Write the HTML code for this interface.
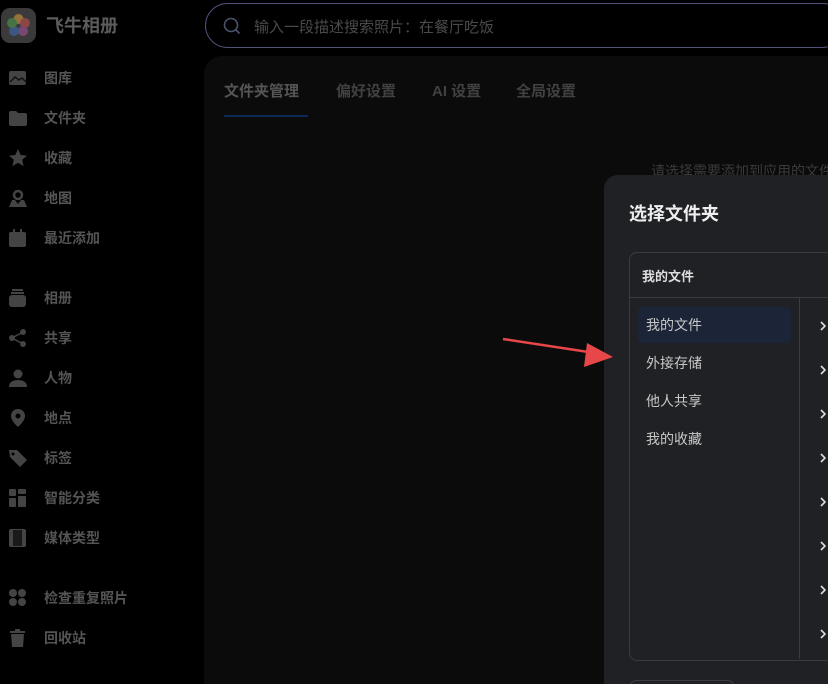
<!DOCTYPE html>
<html><head><meta charset="utf-8"><style>
html,body{margin:0;width:828px;height:684px;overflow:hidden;}
body{background:#000;position:relative;font-family:"Liberation Sans","Noto Sans CJK SC",sans-serif;}
.logo{position:absolute;left:1px;top:8px;width:35px;height:35px;border-radius:9px;background:#3a3a3a;}
.brand{position:absolute;left:46px;top:12px;font-size:18px;font-weight:bold;color:#5c5c5c;}
.nav{position:absolute;left:0;width:200px;height:40px;}
.nav span{position:absolute;left:44px;top:10px;font-size:14px;font-weight:bold;color:#545454;}
.nav svg{position:absolute;left:8px;top:10px;}
.search{position:absolute;left:205px;top:3px;width:640px;height:45px;border:1.5px solid #50527a;border-radius:23px;box-sizing:border-box;}
.search span{position:absolute;left:48px;top:12px;font-size:15px;color:#4a4a4a;}
.main{position:absolute;left:204px;top:56px;width:640px;height:628px;background:#0b0b0b;border-radius:18px 18px 0 0;}
.tab{position:absolute;top:80px;font-size:15px;font-weight:bold;color:#414141;}
.modal{position:absolute;left:604px;top:175px;width:240px;height:509px;background:#202124;border-radius:14px 14px 0 0;}
.box{position:absolute;left:629px;top:252px;width:220px;height:407px;border:1px solid #3a3b3e;border-radius:8px;}
.it{position:absolute;left:646px;font-size:14px;color:#c8c8c8;line-height:18px}
</style></head><body>
<div class="logo"><svg width="35" height="35" viewBox="0 0 35 35"><g opacity=".55"><circle cx="17.5" cy="11" r="5" fill="#e0a040"/><circle cx="24" cy="15" r="5" fill="#d05050"/><circle cx="22" cy="23" r="5" fill="#b050a0"/><circle cx="13" cy="23" r="5" fill="#4070c0"/><circle cx="11" cy="15" r="5" fill="#50a050"/></g></svg></div>
<div class="brand">飞牛相册</div>
<div class="search"><svg style="position:absolute;left:17px;top:13px" width="18" height="18" viewBox="0 0 18 18"><circle cx="8" cy="8" r="6.5" fill="none" stroke="#4a5470" stroke-width="1.6"/><path d="M13 13l3.5 3.5" stroke="#4a5470" stroke-width="1.6"/></svg><span>输入一段描述搜索照片：在餐厅吃饭</span></div>
<div class="main"></div>
<div class="tab" style="left:224px;color:#555">文件夹管理</div>
<div style="position:absolute;left:224px;top:115px;width:84px;height:2px;background:#0d2a5a"></div>
<div class="tab" style="left:336px">偏好设置</div>
<div class="tab" style="left:432px">AI 设置</div>
<div class="tab" style="left:516px">全局设置</div>
<div style="position:absolute;left:651px;top:161px;font-size:14px;color:#3a3a3a;white-space:nowrap">请选择需要添加到应用的文件夹</div>

<div class="nav" style="top:58px"><svg width="20" height="20"><rect x="1" y="3" width="17" height="14" rx="2" fill="#444"/><path d="M2 14l5-5 4 3 3-2 4 4" stroke="#111" stroke-width="1.5" fill="none"/></svg><span>图库</span></div>
<div class="nav" style="top:98px"><svg width="20" height="20"><path d="M1 5a2 2 0 012-2h5l2 2h7a2 2 0 012 2v9a2 2 0 01-2 2H3a2 2 0 01-2-2z" fill="#444"/></svg><span>文件夹</span></div>
<div class="nav" style="top:138px"><svg width="20" height="20"><path d="M10 1l2.7 6 6.3.6-4.8 4.2 1.4 6.3L10 14.8 4.4 18.1l1.4-6.3L1 7.6l6.3-.6z" fill="#444"/></svg><span>收藏</span></div>
<div class="nav" style="top:178px"><svg width="20" height="20"><circle cx="10" cy="7" r="4" fill="none" stroke="#444" stroke-width="2.5"/><path d="M1 19l3-7h3l3 4 3-4h3l3 7z" fill="#444"/></svg><span>地图</span></div>
<div class="nav" style="top:218px"><svg width="20" height="20"><rect x="1" y="4" width="17" height="15" rx="2" fill="#444"/><rect x="5" y="1" width="2" height="4" fill="#444"/><rect x="12" y="1" width="2" height="4" fill="#444"/></svg><span>最近添加</span></div>
<div class="nav" style="top:278px"><svg width="20" height="20"><rect x="1" y="7" width="17" height="12" rx="3" fill="#444"/><rect x="3" y="4" width="13" height="2" fill="#444"/><rect x="4" y="1" width="11" height="2" fill="#444"/></svg><span>相册</span></div>
<div class="nav" style="top:318px"><svg width="20" height="20"><circle cx="15" cy="4" r="3" fill="#444"/><circle cx="4" cy="10" r="3" fill="#444"/><circle cx="15" cy="16" r="3" fill="#444"/><path d="M15 4L4 10l11 6" stroke="#444" stroke-width="1.5" fill="none"/></svg><span>共享</span></div>
<div class="nav" style="top:358px"><svg width="20" height="20"><circle cx="10" cy="6" r="4.5" fill="#444"/><path d="M1 19c0-5 4-7 9-7s9 2 9 7z" fill="#444"/></svg><span>人物</span></div>
<div class="nav" style="top:398px"><svg width="20" height="20"><path d="M10 1a7 7 0 017 7c0 5-7 11-7 11S3 13 3 8a7 7 0 017-7z" fill="#444"/><circle cx="10" cy="8" r="2.5" fill="#000"/></svg><span>地点</span></div>
<div class="nav" style="top:438px"><svg width="20" height="20"><path d="M1 2h8l10 10-7 7L2 9z" fill="#444"/><circle cx="5" cy="6" r="1.5" fill="#000"/></svg><span>标签</span></div>
<div class="nav" style="top:478px"><svg width="20" height="20"><rect x="1" y="1" width="7" height="7" rx="1" fill="#444"/><rect x="10" y="1" width="8" height="5" rx="1" fill="#444"/><rect x="1" y="10" width="7" height="9" rx="1" fill="#444"/><rect x="10" y="8" width="8" height="11" rx="1" fill="#444"/></svg><span>智能分类</span></div>
<div class="nav" style="top:518px"><svg width="20" height="20"><rect x="1" y="1" width="17" height="18" rx="2" fill="#444"/><rect x="5" y="2" width="9" height="16" fill="#1a1a1a"/></svg><span>媒体类型</span></div>
<div class="nav" style="top:578px"><svg width="20" height="20"><circle cx="5" cy="5" r="4" fill="#444"/><circle cx="14" cy="5" r="4" fill="#444"/><circle cx="5" cy="14" r="4" fill="#444"/><circle cx="14" cy="14" r="4" fill="#444"/></svg><span>检查重复照片</span></div>
<div class="nav" style="top:618px"><svg width="20" height="20"><rect x="2" y="3" width="15" height="2" fill="#444"/><rect x="7" y="1" width="5" height="2" fill="#444"/><path d="M3 6h13l-1 13H4z" fill="#444"/></svg><span>回收站</span></div>

<div class="modal"></div>
<div style="position:absolute;left:629px;top:200px;font-size:18px;font-weight:bold;color:#eee">选择文件夹</div>
<div class="box"></div>
<div style="position:absolute;left:642px;top:266px;font-size:13px;font-weight:bold;color:#ddd">我的文件</div>
<div style="position:absolute;left:630px;top:297px;width:210px;height:1px;background:#3a3b3e"></div>
<div style="position:absolute;left:799px;top:298px;width:1px;height:361px;background:#3a3b3e"></div>
<div style="position:absolute;left:638px;top:307px;width:153px;height:36px;background:#1b2537;border-radius:4px"></div>
<div class="it" style="top:316px">我的文件</div>
<div class="it" style="top:354px">外接存储</div>
<div class="it" style="top:392px">他人共享</div>
<div class="it" style="top:430px">我的收藏</div>
<svg style="position:absolute;left:815px;top:300px" width="13" height="360">
<g stroke="#ddd" stroke-width="1.6" fill="none">
<path d="M6 22l4 4-4 4"/><path d="M6 66l4 4-4 4"/><path d="M6 110l4 4-4 4"/><path d="M6 154l4 4-4 4"/><path d="M6 198l4 4-4 4"/><path d="M6 242l4 4-4 4"/><path d="M6 286l4 4-4 4"/><path d="M6 330l4 4-4 4"/></g></svg>
<div style="position:absolute;left:630px;top:680px;width:102px;height:20px;border:1px solid #3a3b3e;border-radius:6px"></div>
<svg style="position:absolute;left:0;top:0" width="828" height="684"><path d="M503 339L595 353" stroke="#e8474a" stroke-width="2.5"/><path d="M613 357L587 343 584 367z" fill="#e8474a"/></svg>
</body></html>
